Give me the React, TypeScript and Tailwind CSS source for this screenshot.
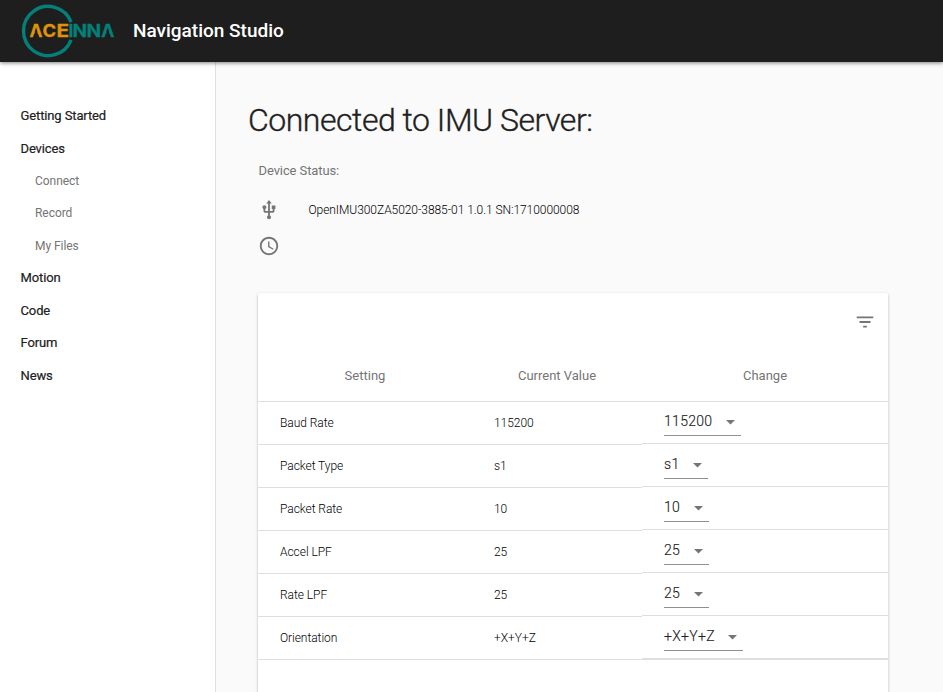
import React from "react";

const navItems = [
  { label: "Getting Started" },
  { label: "Devices", spaced: true },
  { label: "Connect", child: true },
  { label: "Record", child: true },
  { label: "My Files", child: true, spaced: true },
  { label: "Motion" },
  { label: "Code", spaced: true },
  { label: "Forum" },
  { label: "News", spaced: true },
];

const settings = [
  { name: "Baud Rate", value: "115200", width: "w-[77px]" },
  { name: "Packet Type", value: "s1", width: "w-[44px]" },
  { name: "Packet Rate", value: "10", width: "w-[45px]" },
  { name: "Accel LPF", value: "25", width: "w-[45px]" },
  { name: "Rate LPF", value: "25", width: "w-[45px]" },
  { name: "Orientation", value: "+X+Y+Z", width: "w-[79px]" },
];

function Logo() {
  return (
    <svg className="h-[62px] w-[100px] shrink-0" viewBox="18 0 100 62">
      <path d="M71.1 22.2A24.6 24.6 0 1 0 71.1 39.8" fill="none" stroke="#028079" strokeWidth="3.4" />
      <g fontFamily="Inter, sans-serif" fontWeight="700" fontSize="17">
        <g fill="#de940a" stroke="#de940a" strokeWidth="0.3">
          <text x="29.6" y="37.2" textLength="13" lengthAdjust="spacingAndGlyphs">A</text>
          <text x="42.6" y="37.2" textLength="13.6" lengthAdjust="spacingAndGlyphs">C</text>
          <text x="56.6" y="37.2" textLength="12.6" lengthAdjust="spacingAndGlyphs">E</text>
        </g>
        <g fill="#028079" stroke="#028079" strokeWidth="0.3">
          <text x="68.4" y="37.2">I</text>
          <text x="72.6" y="37.2" textLength="14.6" lengthAdjust="spacingAndGlyphs">N</text>
          <text x="86.6" y="37.2" textLength="14.6" lengthAdjust="spacingAndGlyphs">N</text>
          <text x="101.2" y="37.2" textLength="13.2" lengthAdjust="spacingAndGlyphs">A</text>
        </g>
      </g>
      <path d="M36.1 28.5L39.2 38H33ZM107.8 28.5L110.9 38H104.7Z" fill="#1e1e1e" />
    </svg>
  );
}

function Icon({ d, className = "" }: { d: string; className?: string }) {
  return (
    <svg className={"shrink-0 fill-[#757575] " + className} viewBox="0 0 24 24">
      <path d={d} />
    </svg>
  );
}

export default function App() {
  return (
    <div className="flex h-[692px] w-[943px] flex-col overflow-hidden bg-[#fafafa] font-[Roboto,sans-serif] text-[#212121]">
      <header className="relative z-10 flex h-[62px] shrink-0 items-center bg-[#1e1e1e] pl-[18px] shadow-[0_1px_4px_rgba(0,0,0,0.5)]">
        <Logo />
        <h1 className="ml-[15px] text-[19px] leading-6 font-medium whitespace-nowrap text-white">Navigation Studio</h1>
      </header>
      <div className="flex min-h-0 flex-1">
        <nav className="flex w-[216px] shrink-0 flex-col border-r border-[#e0e0e0] bg-white pt-[38px]">
          {navItems.map((n) => (
            <a
              key={n.label}
              className={
                (n.spaced ? "mt-px " : "") +
                (n.child
                  ? "flex h-8 items-center pl-[35px] text-[12px] tracking-[-0.05px] text-[#757575]"
                  : "flex h-8 items-center pl-[20.5px] text-[13px] tracking-[-0.12px] [-webkit-text-stroke:0.2px]")
              }
            >
              {n.label}
            </a>
          ))}
        </nav>
        <main className="flex flex-1 flex-col pl-8">
          <h2 className="mt-[38px] text-[32px] leading-10 font-light tracking-[-0.48px] [-webkit-text-stroke:0.35px]">Connected to IMU Server:</h2>
          <div className="ml-[10px] w-[630px]">
            <p className="mt-[21px] pl-[0.5px] text-[13px] leading-5 tracking-[-0.1px] text-[#757575]">Device Status:</p>
            <div className="mt-[17px] flex h-6 items-center">
              <Icon className="size-[22px]" d="M15 7v4h1v2h-3V5h2l-3-4-3 4h2v8H8v-2.07c.7-.37 1.2-1.08 1.2-1.93 0-1.21-.99-2.2-2.2-2.2S4.8 7.79 4.8 9c0 .85.5 1.56 1.2 1.93V13c0 1.11.89 2 2 2h3v3.05c-.71.37-1.2 1.1-1.2 1.95 0 1.22.99 2.2 2.2 2.2s2.2-.98 2.2-2.2c0-.85-.49-1.58-1.2-1.95V15h3c1.11 0 2-.89 2-2v-2h1V7z" />
              <span className="ml-[28.5px] text-[12px] font-light tracking-[-0.06px] text-black">OpenIMU300ZA5020-3885-01 1.0.1 SN:1710000008</span>
            </div>
            <div className="mt-3 flex h-6 items-center">
              <Icon className="size-[22px]" d="M11.99 2C6.47 2 2 6.48 2 12s4.47 10 9.99 10C17.52 22 22 17.52 22 12S17.52 2 11.99 2zM12 20c-4.42 0-8-3.58-8-8s3.58-8 8-8 8 3.58 8 8-3.58 8-8 8zm.5-13H11v6l5.25 3.15.75-1.23-4.5-2.67z" />
            </div>
            <section className="mt-[35px] flex h-[460px] flex-col rounded-[2px] bg-white shadow-[0_1px_3px_rgba(0,0,0,0.28)]">
              <div className="flex h-[58px] items-center justify-end pr-[12px]">
                <Icon className="size-[22px]" d="M10 18h4v-2h-4v2zM3 6v2h18V6H3zm3 7h12v-2H6v2z" />
              </div>
              <div className="grid h-[51px] grid-cols-[214px_170px_246px] items-center border-b border-[#dfdfdf] text-center text-[13px] text-[#757575]">
                <span>Setting</span>
                <span>Current Value</span>
                <span>Change</span>
              </div>
              {settings.map((s, i) => (
                <div key={s.name} className="grid h-[43px] grid-cols-[214px_170px_246px] items-start text-[12px]">
                  <div className="flex h-[43px] items-center border-b border-[#dfdfdf] pl-[22px] font-light tracking-[-0.05px] text-black">{s.name}</div>
                  <div className="flex h-[43px] items-center border-b border-[#dfdfdf] pl-[22px] font-light tracking-[-0.05px] text-black">{s.value}</div>
                  <div
                    className={
                      i === settings.length - 1
                        ? "h-[43px] border-b-2 border-[#dfdfdf] pl-[22px]"
                        : "h-[42px] border-b border-[#dfdfdf] pl-[22px]"
                    }
                  >
                    <button className={"flex h-[34px] items-center justify-between border-b border-[#8f8f8f] pt-[6px] pr-[6px] text-[14px] font-light tracking-[0.3px] [-webkit-text-stroke:0.15px] " + s.width}>
                      <span>{s.value}</span>
                      <svg className="mt-px h-[5px] w-[9px] fill-[#757575]" viewBox="0 0 9 5">
                        <path d="M0 0H9L4.5 4.5Z" />
                      </svg>
                    </button>
                  </div>
                </div>
              ))}
            </section>
          </div>
        </main>
      </div>
    </div>
  );
}
